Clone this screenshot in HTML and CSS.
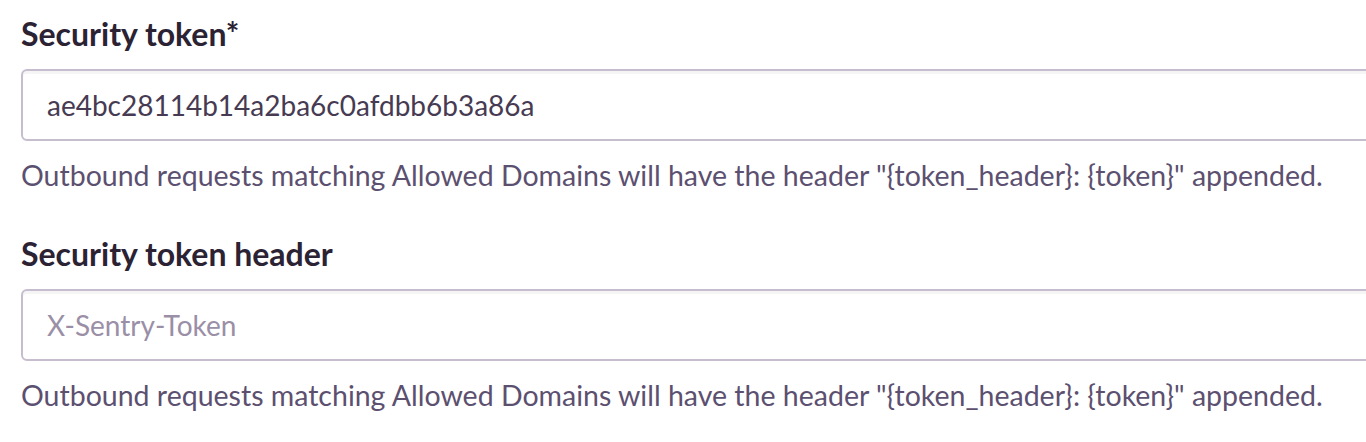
FILE: index.html
```html
<!DOCTYPE html>
<html>
  <head>
    <title>Security token</title>
    <link rel="stylesheet" href="styles.css">
  </head>
  <body>
    <div class="form">
      <div class="field">
        <label class="field-label" for="security-token">Security token*</label>
        <input class="field-input" type="text" id="security-token" value="ae4bc28114b14a2ba6c0afdbb6b3a86a">
        <p class="field-help">Outbound requests matching Allowed Domains will have the header "{token_header}: {token}" appended.</p>
      </div>

      <div class="field">
        <label class="field-label" for="security-token-header">Security token header</label>
        <input class="field-input" type="text" id="security-token-header" placeholder="X-Sentry-Token">
        <p class="field-help">Outbound requests matching Allowed Domains will have the header "{token_header}: {token}" appended.</p>
      </div>
    </div>
  </body>
</html>
```

FILE: styles.css
```css
body {
  margin: 0;
  padding: 0;
  background-color: #fff;
  font-family: Lato, "Noto Sans", sans-serif;
  overflow: hidden;
}

.form {
  width: 1400px;
  padding: 14px 0 0 21px;
}

.field {
  display: flex;
  flex-direction: column;
  margin-bottom: 41px;
}

.field-label {
  font-size: 32px;
  font-weight: 700;
  color: #2b2233;
  line-height: 40px;
  margin-bottom: 15px;
}

.field-input {
  box-sizing: border-box;
  height: 72px;
  padding: 0 24px;
  border: 2px solid #c6becf;
  border-radius: 6px;
  box-shadow: inset 0 3px 0 rgba(0, 0, 0, 0.04);
  font-family: Lato, "Noto Sans", sans-serif;
  font-size: 28px;
  color: #463b52;
  outline: none;
}

.field-input::placeholder {
  color: #9a8fa6;
}

.field-help {
  margin: 16px 0 0;
  font-size: 28.5px;
  line-height: 36px;
  color: #5c5070;
}
```
